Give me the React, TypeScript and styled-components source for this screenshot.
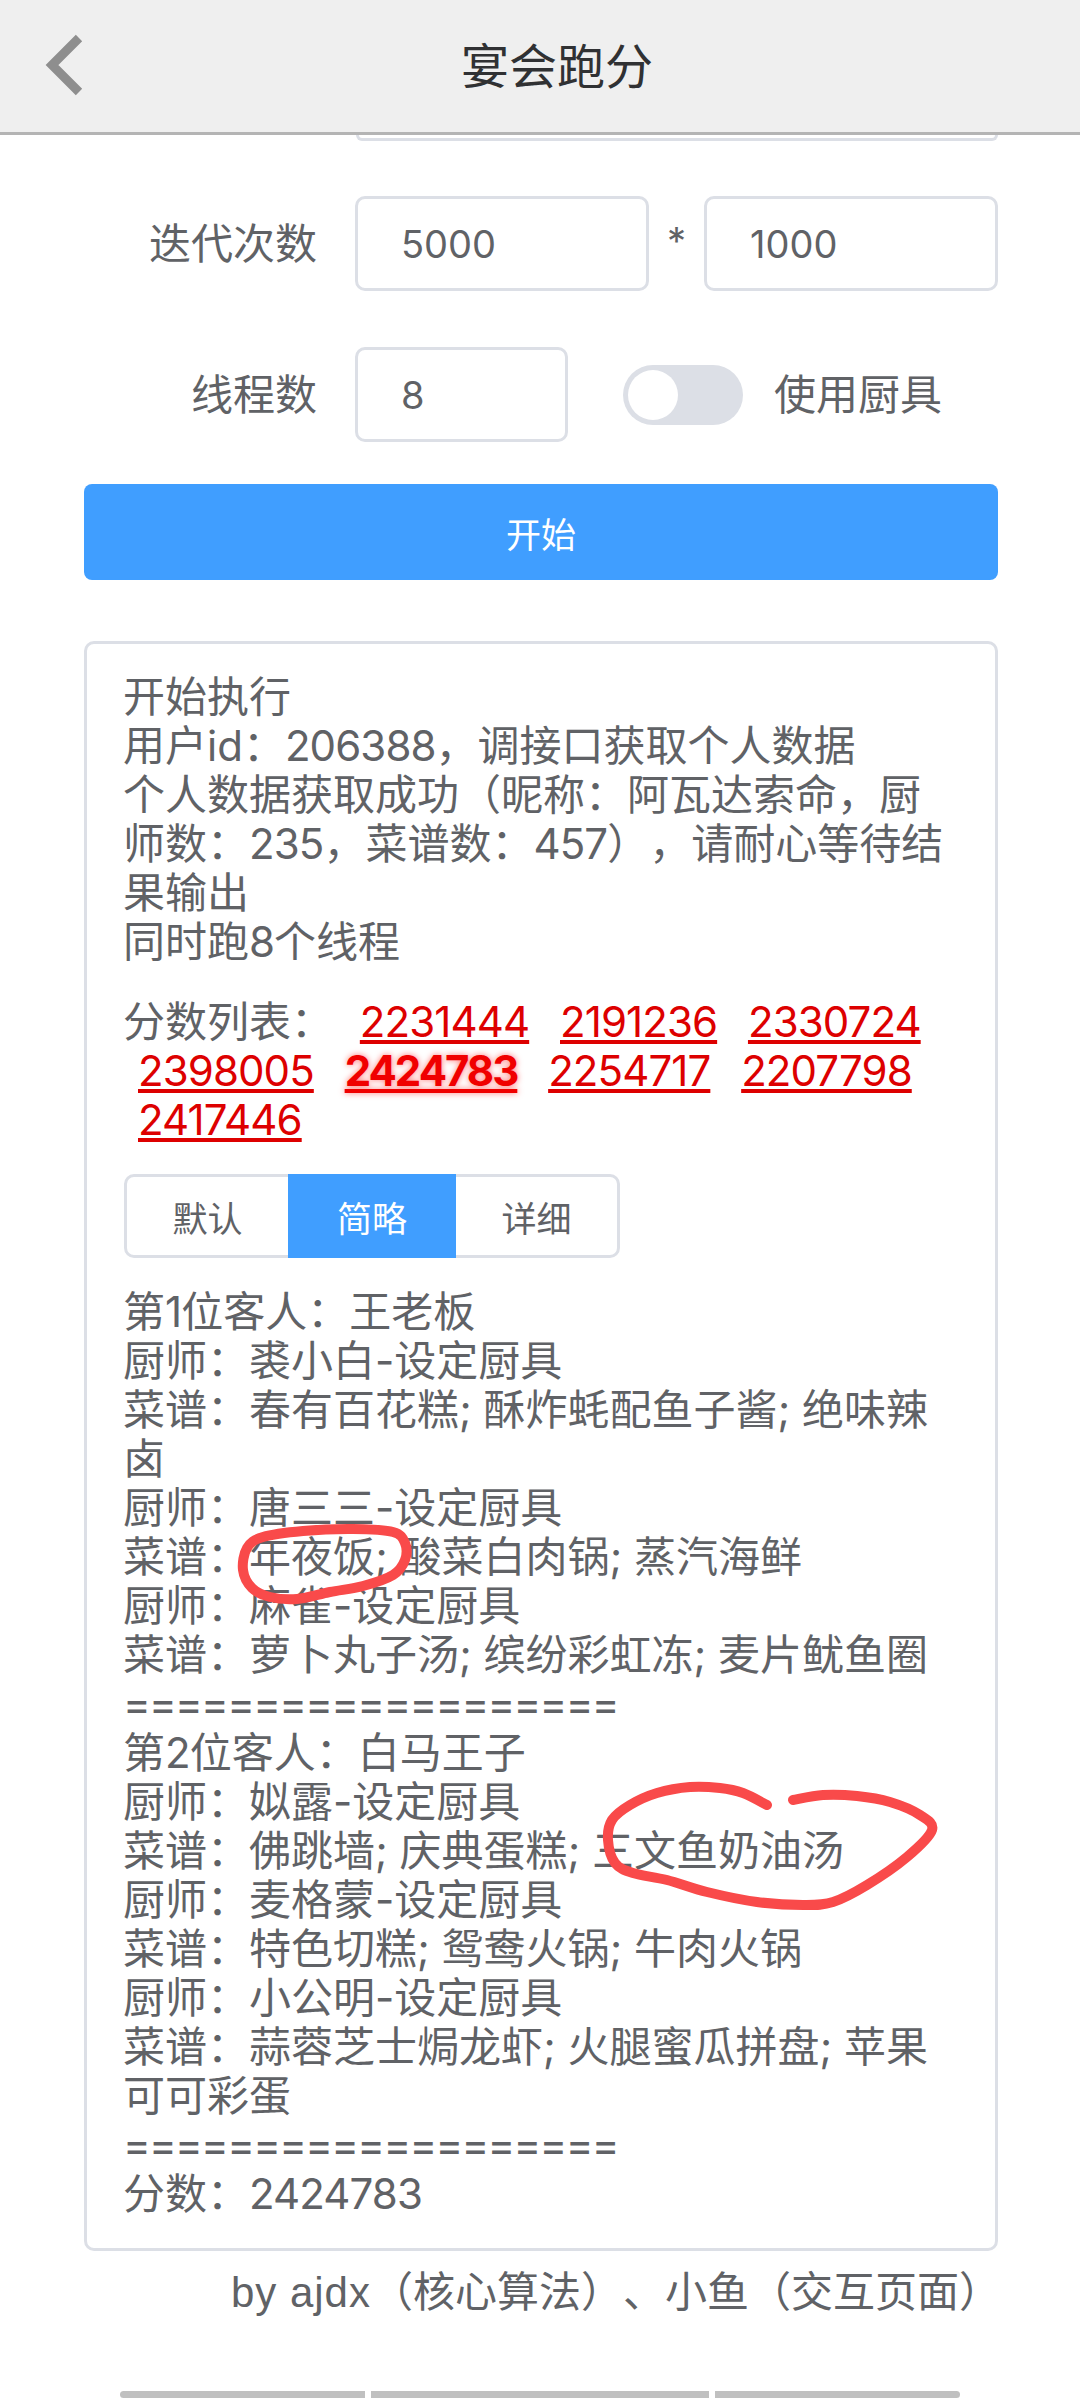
import React from 'react';
import styled, { createGlobalStyle } from 'styled-components';

const GlobalStyle = createGlobalStyle`
  html, body {
    margin: 0;
    background: #fff;
  }
  body {
    font-family: Inter, "Noto Sans CJK SC", sans-serif;
    font-size: 42px;
    line-height: 49px;
    color: #606266;
    text-spacing-trim: space-all;
  }
`;

const Page = styled.div`
  position: relative;
  width: 1080px;
  height: 2400px;
  overflow: hidden;
  background: #fff;
`;

const Header = styled.header`
  display: flex;
  align-items: center;
  height: 132px;
  padding-left: 44px;
  background: #efefef;
  border-bottom: 3px solid #b4b4b4;
`;

const BackIcon = styled.svg`
  width: 42px;
  height: 64px;
`;

const Title = styled.h1`
  margin: 0 0 0 375px;
  font-size: 48px;
  font-weight: 400;
  color: #303133;
`;

const Content = styled.main`
  padding: 0 82px 0 84px;
`;

const ClippedInput = styled.div`
  height: 3px;
  margin: 0 0 55px 272px;
  border: 3px solid #dcdfe6;
  border-top: 0;
  border-radius: 0 0 10px 10px;
`;

const FormRow = styled.div`
  display: flex;
  align-items: center;
  height: 95px;
  margin-bottom: 56px;
`;

const Label = styled.label`
  flex: 0 0 233px;
  margin-right: 38px;
  text-align: right;
`;

const Field = styled.input<{ $width: number }>`
  box-sizing: border-box;
  width: ${(p) => p.$width}px;
  height: 95px;
  padding: 0 0 0 43px;
  border: 3px solid #dcdfe6;
  border-radius: 10px;
  outline: none;
  background: #fff;
  color: #606266;
  font-family: Inter, "Noto Sans CJK SC", sans-serif;
  font-size: 38px;
`;

const Times = styled.span`
  flex: 0 0 55px;
  margin-top: -4px;
  text-align: center;
  font-size: 38px;
`;

const Toggle = styled.span`
  position: relative;
  flex: 0 0 120px;
  height: 60px;
  margin: 0 31px 0 55px;
  border-radius: 30px;
  background: #dcdfe6;

  &::after {
    content: '';
    position: absolute;
    top: 5px;
    left: 5px;
    width: 50px;
    height: 50px;
    border-radius: 50%;
    background: #fff;
  }
`;

const StartButton = styled.button`
  display: block;
  width: 914px;
  height: 96px;
  margin: -14px 0 61px;
  padding: 0;
  border: 0;
  border-radius: 8px;
  background: #409eff;
  color: #fff;
  font-family: Inter, "Noto Sans CJK SC", sans-serif;
  font-size: 35px;
`;

const ResultBox = styled.section`
  box-sizing: border-box;
  width: 914px;
  height: 1610px;
  padding: 28px 41px 30px 36px;
  border: 3px solid #dcdfe6;
  border-radius: 10px;
`;

const Line = styled.div``;

const Digits = styled.span`
  letter-spacing: -0.9px;
`;

const Separator = styled.div`
  letter-spacing: -1.75px;
`;

const ScoreList = styled.div`
  margin: 31px 0 30px;
`;

const ScoreLink = styled.a<{ $best?: boolean }>`
  display: inline-block;
  margin: 0 4px 0 15px;
  color: ${(p) => (p.$best ? '#f00000' : '#dd0000')};
  font-weight: ${(p) => (p.$best ? 700 : 400)};
  letter-spacing: ${(p) => (p.$best ? '-2px' : '-0.9px')};
  text-decoration: underline;
  text-shadow: ${(p) => (p.$best ? '0 0 6px rgba(255, 0, 0, 0.55)' : 'none')};
`;

const ModeGroup = styled.div`
  display: inline-flex;
  box-sizing: border-box;
  height: 84px;
  margin: 0 0 29px 1px;
  border: 3px solid #dcdfe6;
  border-radius: 10px;
  vertical-align: top;
`;

const ModeButton = styled.button<{ $active?: boolean; $width: number }>`
  width: ${(p) => p.$width}px;
  margin: ${(p) => (p.$active ? '-3px 0' : '0')};
  padding: 0;
  border: 0;
  background: ${(p) => (p.$active ? '#409eff' : 'transparent')};
  color: ${(p) => (p.$active ? '#fff' : '#606266')};
  font-family: Inter, "Noto Sans CJK SC", sans-serif;
  font-size: 35px;
`;

const Credit = styled.p`
  margin: 16px 0 0;
  padding-right: 79px;
  text-align: right;
`;

const CreditLatin = styled.span`
  font-family: "Liberation Sans", sans-serif;
  letter-spacing: 1px;
`;

const BottomBars = styled.div`
  display: grid;
  grid-template-columns: 245px 338px 245px;
  gap: 6px;
  margin: 74px 0 0 120px;
`;

const Bar = styled.span<{ $side?: 'left' | 'right' }>`
  height: 7px;
  background: #c0c0c0;
  border-radius: ${(p) =>
    p.$side === 'left' ? '4px 0 0 4px' : p.$side === 'right' ? '0 4px 4px 0' : '0'};
`;

const Scribbles = styled.svg`
  position: absolute;
  top: 0;
  left: 0;
  pointer-events: none;
`;

type Point = [number, number];

// Catmull-Rom through the points, so a scribble can be given as a few samples
function smoothPath(points: Point[], closed: boolean) {
  const at = (i: number) =>
    closed
      ? points[(i + points.length) % points.length]
      : points[Math.max(0, Math.min(points.length - 1, i))];
  const count = closed ? points.length : points.length - 1;
  let d = `M${points[0][0]} ${points[0][1]}`;
  for (let i = 0; i < count; i++) {
    const [p0, p1, p2, p3] = [at(i - 1), at(i), at(i + 1), at(i + 2)];
    const c1 = [p1[0] + (p2[0] - p0[0]) / 6, p1[1] + (p2[1] - p0[1]) / 6];
    const c2 = [p2[0] - (p3[0] - p1[0]) / 6, p2[1] - (p3[1] - p1[1]) / 6];
    d += `C${c1[0]} ${c1[1]} ${c2[0]} ${c2[1]} ${p2[0]} ${p2[1]}`;
  }
  return d;
}

const ringOne: Point[] = [
  [405, 1543], [393, 1532], [353, 1529], [303, 1531], [263, 1537], [247, 1548], [243, 1570],
  [252, 1588], [270, 1597], [297, 1599], [330, 1592], [363, 1586], [393, 1575], [405, 1560],
];

const ringTwo: Point[] = [
  [767, 1805], [743, 1793], [720, 1788], [690, 1787], [657, 1793], [630, 1805], [612, 1820],
  [608, 1840], [615, 1863], [633, 1873], [667, 1880], [707, 1892], [757, 1902], [803, 1905],
  [833, 1902], [867, 1885], [907, 1857], [932, 1830], [920, 1815], [890, 1802], [857, 1796],
  [823, 1795], [793, 1800],
];

const logLines = [
  '开始执行',
  '用户id：206388，调接口获取个人数据',
  '个人数据获取成功（昵称：阿瓦达索命，厨师数：235，菜谱数：457），请耐心等待结果输出',
  '同时跑8个线程',
];

const scores = [2231444, 2191236, 2330724, 2398005, 2424783, 2254717, 2207798, 2417446];
const bestScore = 2424783;

const SEPARATOR = '===================';

const detailLines = [
  '第1位客人：王老板',
  '厨师：裘小白-设定厨具',
  '菜谱：春有百花糕; 酥炸蚝配鱼子酱; 绝味辣卤',
  '厨师：唐三三-设定厨具',
  '菜谱：年夜饭; 酸菜白肉锅; 蒸汽海鲜',
  '厨师：麻雀-设定厨具',
  '菜谱：萝卜丸子汤; 缤纷彩虹冻; 麦片鱿鱼圈',
  SEPARATOR,
  '第2位客人：白马王子',
  '厨师：姒露-设定厨具',
  '菜谱：佛跳墙; 庆典蛋糕; 三文鱼奶油汤',
  '厨师：麦格蒙-设定厨具',
  '菜谱：特色切糕; 鸳鸯火锅; 牛肉火锅',
  '厨师：小公明-设定厨具',
  '菜谱：蒜蓉芝士焗龙虾; 火腿蜜瓜拼盘; 苹果可可彩蛋',
  SEPARATOR,
  '分数：2424783',
];

// digits run a little wider than the reference font, so they get tightened
function withDigits(text: string) {
  return text
    .split(/(\d+)/)
    .map((part, i) => (i % 2 ? <Digits key={i}>{part}</Digits> : part));
}

export default function App() {
  return (
    <Page>
      <GlobalStyle />
      <Header>
        <BackIcon viewBox="0 0 42 64">
          <path d="M35 4 L8 31 L35 58" fill="none" stroke="#8e8e8e" strokeWidth="9" />
        </BackIcon>
        <Title>宴会跑分</Title>
      </Header>

      <Content>
        <ClippedInput />
        <FormRow>
          <Label>迭代次数</Label>
          <Field $width={294} defaultValue="5000" />
          <Times>*</Times>
          <Field $width={294} defaultValue="1000" />
        </FormRow>
        <FormRow>
          <Label>线程数</Label>
          <Field $width={213} defaultValue="8" />
          <Toggle />
          <span>使用厨具</span>
        </FormRow>
        <StartButton>开始</StartButton>

        <ResultBox>
          {logLines.map((line) => (
            <Line key={line}>{withDigits(line)}</Line>
          ))}
          <ScoreList>
            分数列表：{' '}
            {scores.map((score) => (
              <React.Fragment key={score}>
                <ScoreLink $best={score === bestScore}>{score}</ScoreLink>{' '}
              </React.Fragment>
            ))}
          </ScoreList>
          <ModeGroup>
            <ModeButton $width={161}>默认</ModeButton>
            <ModeButton $width={168} $active>
              简略
            </ModeButton>
            <ModeButton $width={161}>详细</ModeButton>
          </ModeGroup>
          {detailLines.map((line, index) =>
            line === SEPARATOR ? (
              <Separator key={index}>{line}</Separator>
            ) : (
              <Line key={index}>{withDigits(line)}</Line>
            )
          )}
        </ResultBox>
      </Content>

      <Credit>
        <CreditLatin>by ajdx</CreditLatin>（核心算法）、小鱼（交互页面）
      </Credit>
      <BottomBars>
        <Bar $side="left" />
        <Bar />
        <Bar $side="right" />
      </BottomBars>

      <Scribbles width="1080" height="2400" viewBox="0 0 1080 2400">
        <path d={smoothPath(ringOne, true)} fill="none" stroke="#f94a4a" strokeWidth="10" />
        <path
          d={smoothPath(ringTwo, false)}
          fill="none"
          stroke="#f94a4a"
          strokeWidth="10"
          strokeLinecap="round"
        />
      </Scribbles>
    </Page>
  );
}
